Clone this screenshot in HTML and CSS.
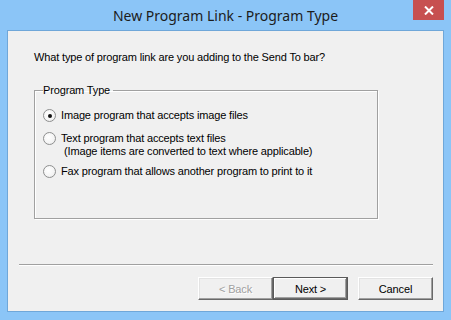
FILE: index.html
```html
<!DOCTYPE html>
<html lang="en">
<head>
<meta charset="utf-8">
<title>New Program Link - Program Type</title>
<link rel="stylesheet" href="styles.css">
</head>
<body>
<div class="window">
  <div class="titlebar">
    <div class="spacer"></div>
    <div class="title">New Program Link - Program Type</div>
    <div class="controls">
      <div class="close">
        <svg width="10" height="9" viewBox="0 0 10 9"><path d="M1 0.5 L9 8.5 M9 0.5 L1 8.5" stroke="#fff" stroke-width="2"/></svg>
      </div>
    </div>
  </div>
  <div class="client">
    <p class="question">What type of program link are you adding to the Send To bar?</p>
    <fieldset class="group">
      <legend class="group-label">Program Type</legend>
      <div class="option opt-1">
        <span class="radio checked"></span>
        <span class="label">Image program that accepts image files</span>
      </div>
      <div class="option opt-2">
        <span class="radio"></span>
        <span class="label">Text program that accepts text files<br><span class="sub">(Image items are converted to text where applicable)</span></span>
      </div>
      <div class="option opt-3">
        <span class="radio"></span>
        <span class="label">Fax program that allows another program to print to it</span>
      </div>
    </fieldset>
    <div class="separator"></div>
    <div class="buttons">
      <div class="btn disabled">&lt; Back</div>
      <div class="btn default">Next &gt;</div>
      <div class="btn cancel">Cancel</div>
    </div>
  </div>
</div>
</body>
</html>
```
FILE: styles.css
```css
html, body {
  margin: 0;
  padding: 0;
}
body {
  width: 451px;
  height: 320px;
  overflow: hidden;
  font-family: "Liberation Sans", Arial, sans-serif;
  font-size: 11px;
  letter-spacing: -0.15px;
  color: #000;
}
.window {
  width: 451px;
  height: 320px;
  box-sizing: border-box;
  background: #8bc5f7;
  display: flex;
  flex-direction: column;
  padding: 0 7px 8px 7px;
}
.titlebar {
  height: 30px;
  display: grid;
  grid-template-columns: 1fr auto 1fr;
  margin: 0 -7px;
  padding: 0 7px;
}
.title {
  font-family: "Noto Sans", sans-serif;
  font-size: 14px;
  letter-spacing: 0;
  line-height: 30px;
  color: #1c1c1c;
  white-space: nowrap;
  padding-top: 1px;
}
.controls {
  display: flex;
  justify-content: flex-end;
  align-items: flex-start;
}
.close {
  width: 31px;
  height: 20px;
  background: #c75050;
  display: flex;
  align-items: center;
  justify-content: center;
}
.client {
  flex: 1;
  background: #f0f0f0;
  border: 1px solid #6fa7d9;
  display: flex;
  flex-direction: column;
}
.question {
  margin: 20px 0 0 26px;
  line-height: 13px;
}
.group {
  margin: 20px 0 0 26px;
  width: 344px;
  box-sizing: border-box;
  border: 1px solid #a0a0a0;
  box-shadow: 1px 1px 0 #fff, inset 1px 1px 0 #fff;
  padding: 12px 0 40px 8px;
}
.group-label {
  padding: 0 3px 0 0;
  margin-left: 0;
  line-height: 13px;
}
.option {
  display: flex;
  align-items: flex-start;
  line-height: 13px;
}
.opt-1 { margin-bottom: 10px; }
.opt-2 { margin-bottom: 7px; }
.radio {
  width: 11px;
  height: 11px;
  border-radius: 50%;
  border: 1px solid #8e8f8f;
  background: radial-gradient(circle at 40% 40%, #fff 0%, #f4f4f4 60%, #e2e2e2 100%);
  margin: 0 5px 0 0;
  flex: none;
  display: flex;
  align-items: center;
  justify-content: center;
}
.radio.checked::after {
  content: "";
  width: 4px;
  height: 4px;
  border-radius: 50%;
  background: #111;
}
.sub {
  padding-left: 3px;
}
.separator {
  margin: 45px 10px 0 11px;
  height: 1px;
  background: #a0a0a0;
  border-bottom: 1px solid #fff;
}
.buttons {
  margin: 11px 10px 0 0;
  display: flex;
  justify-content: flex-end;
}
.btn {
  width: 75px;
  height: 23px;
  box-sizing: border-box;
  display: flex;
  align-items: center;
  justify-content: center;
  background: #f0f0f0;
  border-top: 1px solid #fff;
  border-left: 1px solid #fff;
  border-right: 1px solid #696969;
  border-bottom: 1px solid #696969;
  box-shadow: inset -1px -1px 0 #a0a0a0, inset 1px 1px 0 #e3e3e3;
}
.btn.disabled {
  color: #a0a0a0;
  text-shadow: 1px 1px 0 #fff;
}
.btn.default {
  border: 1px solid #5a5a5a;
  box-shadow: inset -1px -1px 0 #696969, inset 1px 1px 0 #fff, inset -2px -2px 0 #a0a0a0;
}
.btn.cancel {
  margin-left: 10px;
}
```
